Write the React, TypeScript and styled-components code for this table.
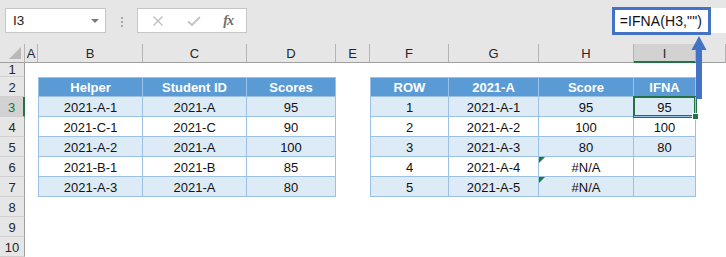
import styled, { createGlobalStyle, css } from 'styled-components';

const GlobalStyle = createGlobalStyle`
  html, body {
    margin: 0;
    padding: 0;
    background: #ffffff;
  }
  body {
    font-family: "Liberation Sans", Arial, sans-serif;
  }
`;

type Kind = 'head' | 'band' | 'plain';

interface TableCell {
  text: string;
  kind: Kind;
  first: boolean;
  top: boolean;
  flag?: boolean;
  selected?: boolean;
}

const COLS = ['A', 'B', 'C', 'D', 'E', 'F', 'G', 'H', 'I', 'J'];
const ROWS = [1, 2, 3, 4, 5, 6, 7, 8, 9, 10];
const SELECTED_COL = 'I';
const SELECTED_ROW = 3;

const leftTable = {
  cols: ['B', 'C', 'D'],
  head: ['Helper', 'Student ID', 'Scores'],
  body: [
    ['2021-A-1', '2021-A', '95'],
    ['2021-C-1', '2021-C', '90'],
    ['2021-A-2', '2021-A', '100'],
    ['2021-B-1', '2021-B', '85'],
    ['2021-A-3', '2021-A', '80'],
  ],
};

const rightTable = {
  cols: ['F', 'G', 'H', 'I'],
  head: ['ROW', '2021-A', 'Score', 'IFNA'],
  body: [
    ['1', '2021-A-1', '95', '95'],
    ['2', '2021-A-2', '100', '100'],
    ['3', '2021-A-3', '80', '80'],
    ['4', '2021-A-4', '#N/A', ''],
    ['5', '2021-A-5', '#N/A', ''],
  ],
};

function lookup(row: number, col: string): TableCell | null {
  for (const t of [leftTable, rightTable]) {
    const ci = t.cols.indexOf(col);
    if (ci < 0 || row < 2 || row > 7) continue;
    const first = ci === 0;
    if (row === 2) return { text: t.head[ci], kind: 'head', first, top: true };
    const text = t.body[row - 3][ci];
    return {
      text,
      kind: row % 2 === 1 ? 'band' : 'plain',
      first,
      top: false,
      flag: text === '#N/A',
      selected: row === SELECTED_ROW && col === SELECTED_COL,
    };
  }
  return null;
}

function CrossIcon() {
  return (
    <svg width="12" height="12" viewBox="0 0 12 12">
      <path d="M1.5 1.5 L10.5 10.5 M10.5 1.5 L1.5 10.5" stroke="#bdbdbd" strokeWidth="1.3" fill="none" />
    </svg>
  );
}

function CheckIcon() {
  return (
    <svg width="14" height="12" viewBox="0 0 14 12">
      <path d="M1 6.5 L5 10 L13 2" stroke="#c4c4c4" strokeWidth="2" fill="none" />
    </svg>
  );
}

function PointerArrow() {
  return (
    <ArrowSvg width="18" height="66" viewBox="0 0 18 66">
      <polygon points="9,1 1.5,15 16.5,15" fill="#4472C4" />
      <rect x="6" y="14" width="6" height="50" fill="#4472C4" />
    </ArrowSvg>
  );
}

export default function App() {
  return (
    <Screen>
      <GlobalStyle />
      <FormulaBar>
        <NameBox>
          <span>I3</span>
          <DropCaret />
        </NameBox>
        <Grip>
          <i />
          <i />
          <i />
        </Grip>
        <FuncBox>
          <CrossIcon />
          <CheckIcon />
          <FxLabel>fx</FxLabel>
        </FuncBox>
        <Spacer />
        <FormulaField>
          <FormulaHighlight>=IFNA(H3,"")</FormulaHighlight>
        </FormulaField>
      </FormulaBar>

      <Sheet>
        <Corner>
          <CornerMark />
        </Corner>
        {COLS.map((c) => (
          <ColHead key={c} $active={c === SELECTED_COL}>
            {c === 'J' ? '' : c}
          </ColHead>
        ))}

        {ROWS.map((r) => [
          <RowHead key={`h${r}`} $active={r === SELECTED_ROW} $short={r === 1}>
            {r}
          </RowHead>,
          ...COLS.map((c) => {
            const cell = lookup(r, c);
            if (!cell) return <Blank key={`${c}${r}`} />;
            return (
              <Cell
                key={`${c}${r}`}
                $kind={cell.kind}
                $first={cell.first}
                $top={cell.top}
                $flag={!!cell.flag}
                $selected={!!cell.selected}
              >
                {cell.text}
              </Cell>
            );
          }),
        ])}
      </Sheet>

      <PointerArrow />
    </Screen>
  );
}

const Screen = styled.div`
  position: relative;
  width: 726px;
  height: 257px;
  overflow: hidden;
  background: #ffffff;
`;

const FormulaBar = styled.div`
  display: flex;
  align-items: flex-start;
  height: 44px;
  box-sizing: border-box;
  padding: 8px 0 0 5px;
  background: #e6e6e6;
`;

const NameBox = styled.div`
  display: flex;
  align-items: center;
  justify-content: space-between;
  width: 101px;
  height: 25px;
  box-sizing: border-box;
  padding: 0 6px 0 7px;
  background: #ffffff;
  border: 1px solid #c6c6c6;
  font-size: 13.5px;
  color: #222222;
`;

const DropCaret = styled.span`
  width: 0;
  height: 0;
  border-left: 4px solid transparent;
  border-right: 4px solid transparent;
  border-top: 4px solid #7a7a7a;
`;

const Grip = styled.div`
  display: flex;
  flex-direction: column;
  gap: 2px;
  margin: 9px 14px 0 15px;

  i {
    display: block;
    width: 2px;
    height: 2px;
    background: #a8a8a8;
  }
`;

const FuncBox = styled.div`
  display: flex;
  align-items: center;
  justify-content: space-between;
  width: 110px;
  height: 25px;
  box-sizing: border-box;
  padding: 0 13px 0 14px;
  background: #ffffff;
  border: 1px solid #c6c6c6;
`;

const FxLabel = styled.span`
  font-family: "Liberation Serif", "Times New Roman", serif;
  font-style: italic;
  font-weight: bold;
  font-size: 14px;
  color: #6e6e6e;
  letter-spacing: -1px;
`;

const Spacer = styled.div`
  flex: 1;
`;

const FormulaField = styled.div`
  display: flex;
  width: 114px;
  height: 25px;
  background: #ffffff;
`;

const FormulaHighlight = styled.div`
  display: flex;
  align-items: center;
  justify-content: flex-end;
  width: 99px;
  height: 28px;
  margin-top: -1px;
  box-sizing: border-box;
  padding: 0 6px 1px 0;
  border: 3px solid #4472c4;
  background: #ffffff;
  font-size: 14px;
  letter-spacing: 0.1px;
  color: #111111;
  white-space: nowrap;
`;

const Sheet = styled.div`
  display: grid;
  grid-template-columns: 25px 13px 105px 104px 89px 34px 79px 90px 95px 62px 1fr;
  grid-template-rows: 19px 14px repeat(9, 20px);
`;

const headerBase = css`
  box-sizing: border-box;
  display: flex;
  align-items: center;
  justify-content: center;
  background: #e6e6e6;
  font-size: 13px;
  color: #262626;
`;

const Corner = styled.div`
  ${headerBase};
  position: relative;
  border-right: 1px solid #b4b4b4;
  border-bottom: 1px solid #9f9f9f;
`;

const CornerMark = styled.span`
  position: absolute;
  right: 3px;
  bottom: 3px;
  width: 0;
  height: 0;
  border-left: 12px solid transparent;
  border-bottom: 12px solid #b8b8b8;
`;

const ColHead = styled.div<{ $active: boolean }>`
  ${headerBase};
  border-right: 1px solid #b4b4b4;
  border-bottom: ${(p) => (p.$active ? '2px solid #217346' : '1px solid #9f9f9f')};
  background: ${(p) => (p.$active ? '#d2d2d2' : '#e6e6e6')};
  padding-top: ${(p) => (p.$active ? '1px' : '0')};
`;

const RowHead = styled.div<{ $active: boolean; $short: boolean }>`
  ${headerBase};
  border-bottom: 1px solid #d0d0d0;
  border-right: ${(p) => (p.$active ? '2px solid #217346' : '1px solid #9f9f9f')};
  background: ${(p) => (p.$active ? '#d2d2d2' : '#e6e6e6')};
  color: ${(p) => (p.$active ? '#217346' : '#262626')};
  padding-top: ${(p) => (p.$short ? '0' : '1px')};
`;

const Blank = styled.div`
  background: #ffffff;
`;

const fills: Record<Kind, string> = {
  head: '#5b9bd5',
  band: '#ddebf7',
  plain: '#ffffff',
};

const Cell = styled.div<{
  $kind: Kind;
  $first: boolean;
  $top: boolean;
  $flag: boolean;
  $selected: boolean;
}>`
  position: relative;
  box-sizing: border-box;
  display: flex;
  align-items: center;
  justify-content: center;
  padding-top: 1px;
  background: ${(p) => fills[p.$kind]};
  border-right: 1px solid #9bc2e6;
  border-bottom: 1px solid #9bc2e6;
  border-left: ${(p) => (p.$first ? '1px solid #9bc2e6' : 'none')};
  border-top: ${(p) => (p.$top ? '1px solid #9bc2e6' : 'none')};
  font-size: 13px;
  font-weight: ${(p) => (p.$kind === 'head' ? 'bold' : 'normal')};
  color: ${(p) => (p.$kind === 'head' ? '#ffffff' : '#111111')};
  white-space: nowrap;

  ${(p) =>
    p.$flag &&
    css`
      &::before {
        content: '';
        position: absolute;
        left: 0;
        top: 0;
        border-top: 6px solid #1e7b34;
        border-right: 6px solid transparent;
      }
    `}

  ${(p) =>
    p.$selected &&
    css`
      z-index: 2;
      box-shadow: 0 0 0 1px #217346, inset 0 0 0 1px #217346;

      &::after {
        content: '';
        position: absolute;
        right: -4px;
        bottom: -4px;
        width: 5px;
        height: 5px;
        background: #217346;
        border: 1px solid #ffffff;
      }
    `}
`;

const ArrowSvg = styled.svg`
  position: absolute;
  left: 690px;
  top: 35px;
  z-index: 3;
`;
